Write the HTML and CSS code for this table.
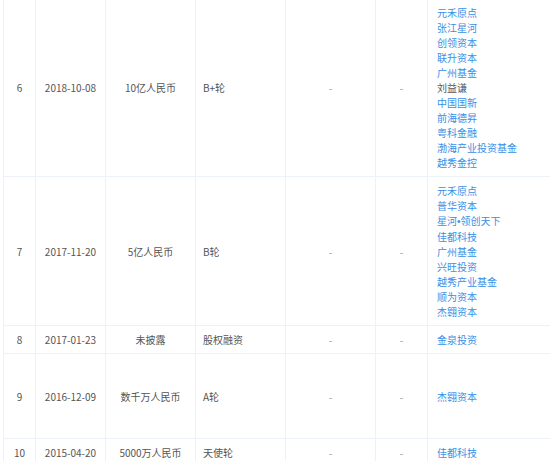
FILE: index.html
```html
<!DOCTYPE html>
<html lang="zh">
<head>
<meta charset="utf-8">
<link rel="stylesheet" href="styles.css">
</head>
<body>
<table class="fin">
  <colgroup>
    <col class="c-no"><col class="c-date"><col class="c-amt"><col class="c-round"><col class="c-val"><col class="c-ratio"><col class="c-inv">
  </colgroup>
  <tbody>
    <tr class="first">
      <td class="ctr">6</td>
      <td class="ctr">2018-10-08</td>
      <td class="ctr">10亿人民币</td>
      <td class="lft">B+轮</td>
      <td class="ctr dash">-</td>
      <td class="ctr dash">-</td>
      <td class="inv">
        <a>元禾原点</a><a>张江星河</a><a>创领资本</a><a>联升资本</a><a>广州基金</a><span>刘益谦</span><a>中国国新</a><a>前海德昇</a><a>粤科金融</a><a>渤海产业投资基金</a><a>越秀金控</a>
      </td>
    </tr>
    <tr>
      <td class="ctr">7</td>
      <td class="ctr">2017-11-20</td>
      <td class="ctr">5亿人民币</td>
      <td class="lft">B轮</td>
      <td class="ctr dash">-</td>
      <td class="ctr dash">-</td>
      <td class="inv">
        <a>元禾原点</a><a>普华资本</a><a>星河<b class="dot">•</b>领创天下</a><a>佳都科技</a><a>广州基金</a><a>兴旺投资</a><a>越秀产业基金</a><a>顺为资本</a><a>杰翱资本</a>
      </td>
    </tr>
    <tr>
      <td class="ctr">8</td>
      <td class="ctr">2017-01-23</td>
      <td class="ctr">未披露</td>
      <td class="lft">股权融资</td>
      <td class="ctr dash">-</td>
      <td class="ctr dash">-</td>
      <td class="inv"><a>金泉投资</a></td>
    </tr>
    <tr class="tall">
      <td class="ctr">9</td>
      <td class="ctr">2016-12-09</td>
      <td class="ctr">数千万人民币</td>
      <td class="lft">A轮</td>
      <td class="ctr dash">-</td>
      <td class="ctr dash">-</td>
      <td class="inv"><a>杰翱资本</a></td>
    </tr>
    <tr>
      <td class="ctr">10</td>
      <td class="ctr">2015-04-20</td>
      <td class="ctr">5000万人民币</td>
      <td class="lft">天使轮</td>
      <td class="ctr dash">-</td>
      <td class="ctr dash">-</td>
      <td class="inv"><a>佳都科技</a></td>
    </tr>
  </tbody>
</table>
</body>
</html>
```
FILE: styles.css
```css
html, body {
  margin: 0;
  padding: 0;
  background: #ffffff;
  overflow: hidden;
}
body {
  font-family: "Noto Sans CJK SC", "Microsoft YaHei", sans-serif;
  font-size: 10px;
  line-height: 15px;
  color: #555555;
}
.fin {
  margin-left: 3px;
  margin-top: -1px;
  border-collapse: collapse;
  table-layout: fixed;
  width: 547px;
}
.c-no { width: 32px; }
.c-date { width: 70px; }
.c-amt { width: 90px; }
.c-round { width: 90px; }
.c-val { width: 90px; }
.c-ratio { width: 52px; }
.c-inv { width: 123px; }
.fin td {
  border: 1px solid #edf2f8;
  padding: 6px 0;
  vertical-align: middle;
}
.fin td:last-child { border-right: none; }
.first td { padding-top: 5px; }
.ctr { text-align: center; }
.fin .lft { text-align: left; padding-left: 7px; }
.dash { color: #999999; }
.fin .inv { padding-left: 9px; }
.inv a, .inv span {
  display: block;
  white-space: nowrap;
}
.inv a { color: #3a8ee6; }
.inv span { color: #555555; }
.dot {
  font-family: "Liberation Sans", sans-serif;
  font-weight: normal;
}
.tall td { height: 72px; }
```
